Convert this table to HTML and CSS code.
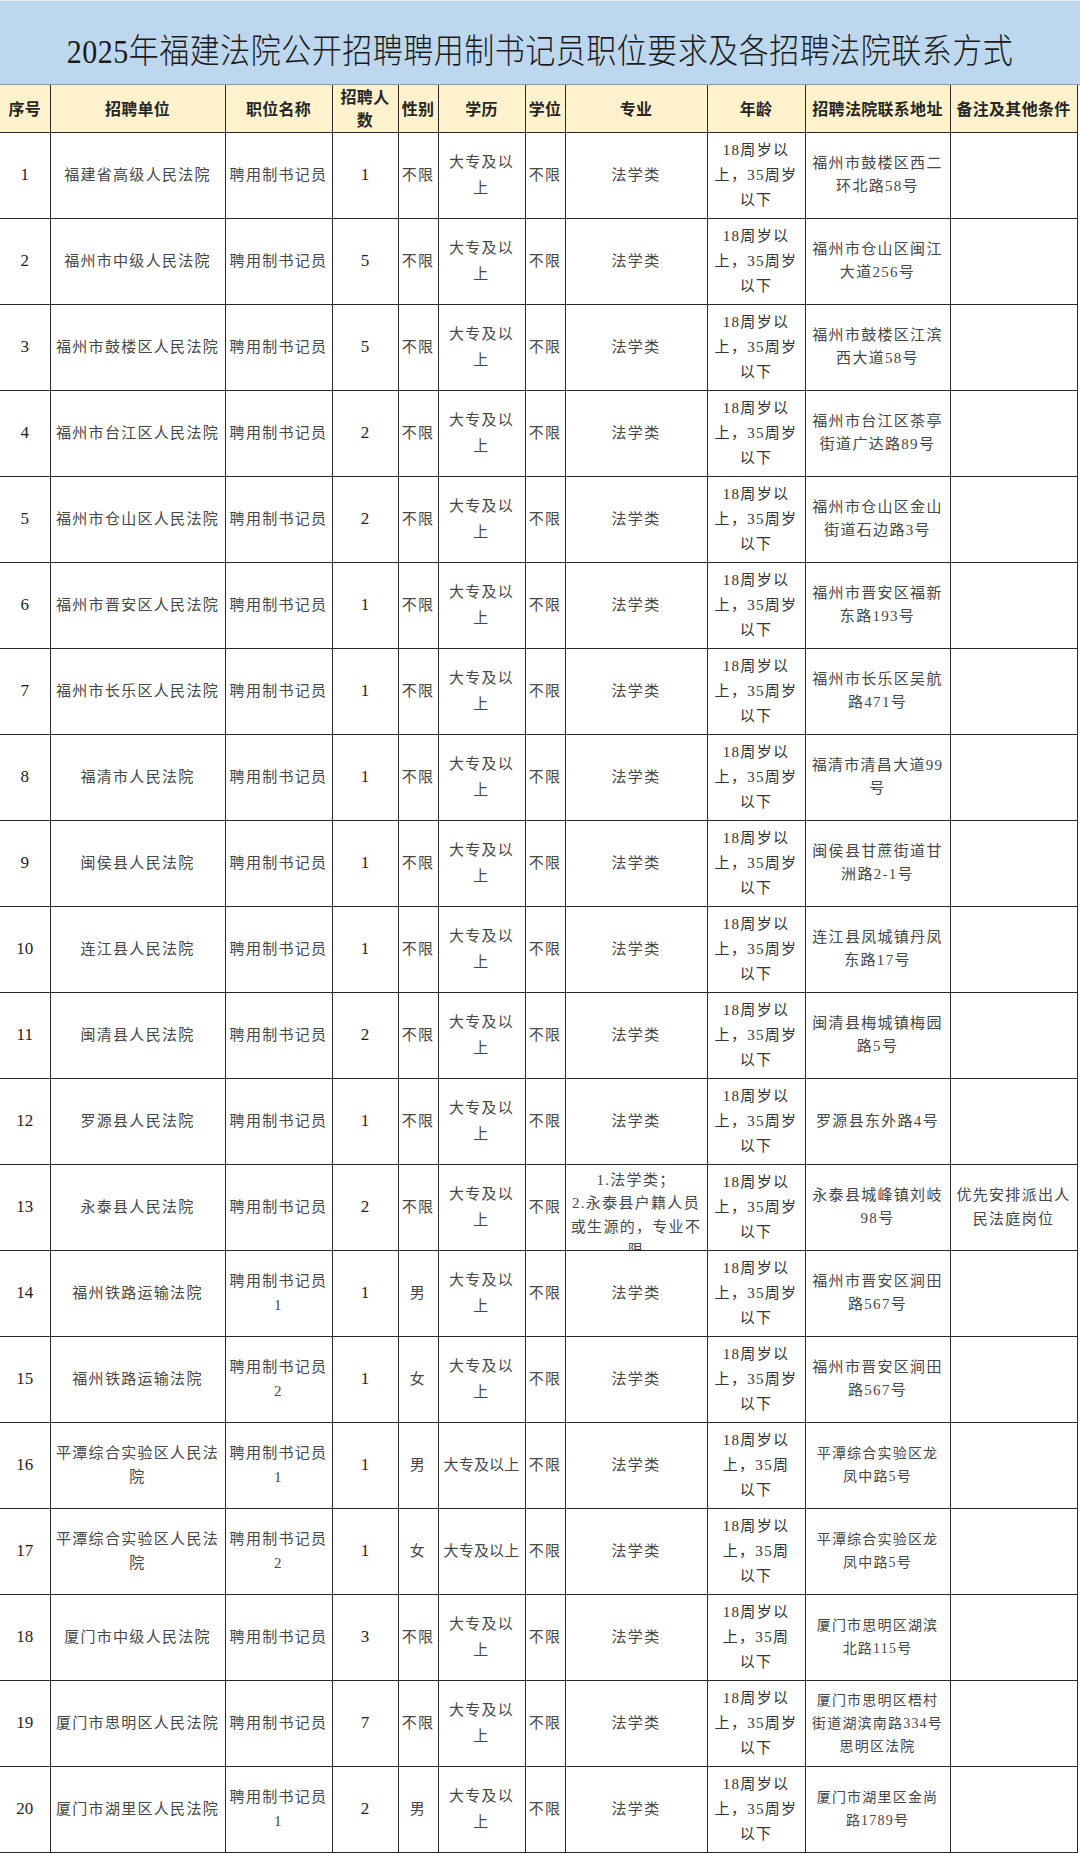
FILE: index.html
```html
<!DOCTYPE html>
<html lang="zh-CN">
<head>
<meta charset="utf-8">
<title>2025年福建法院公开招聘聘用制书记员职位要求及各招聘法院联系方式</title>
<link rel="stylesheet" href="styles.css">
</head>
<body>
<div class="sheet">
  <h1 class="title"><span class="title-text">2025年福建法院公开招聘聘用制书记员职位要求及各招聘法院联系方式</span></h1>
  <table class="grid">
    <colgroup>
      <col class="w-no"><col class="w-unit"><col class="w-pos"><col class="w-num"><col class="w-sex"><col class="w-edu"><col class="w-deg"><col class="w-major"><col class="w-age"><col class="w-addr"><col class="w-note">
    </colgroup>
    <thead>
      <tr class="head">
        <th>序号</th><th>招聘单位</th><th>职位名称</th><th>招聘人<br>数</th><th>性别</th><th>学历</th><th>学位</th><th>专业</th><th>年龄</th><th>招聘法院联系地址</th><th>备注及其他条件</th>
      </tr>
    </thead>
    <tbody>
      <tr><td class="no">1</td><td>福建省高级人民法院</td><td>聘用制书记员</td><td class="num">1</td><td>不限</td><td class="edu">大专及以<br>上</td><td class="gl">不限</td><td>法学类</td><td class="age">18周岁以<br>上，35周岁<br>以下</td><td class="addr">福州市鼓楼区西二<br>环北路58号</td><td class="note"></td></tr>
      <tr><td class="no">2</td><td>福州市中级人民法院</td><td>聘用制书记员</td><td class="num">5</td><td>不限</td><td class="edu">大专及以<br>上</td><td class="gl">不限</td><td>法学类</td><td class="age">18周岁以<br>上，35周岁<br>以下</td><td class="addr">福州市仓山区闽江<br>大道256号</td><td class="note"></td></tr>
      <tr><td class="no">3</td><td>福州市鼓楼区人民法院</td><td>聘用制书记员</td><td class="num">5</td><td>不限</td><td class="edu">大专及以<br>上</td><td class="gl">不限</td><td>法学类</td><td class="age">18周岁以<br>上，35周岁<br>以下</td><td class="addr">福州市鼓楼区江滨<br>西大道58号</td><td class="note"></td></tr>
      <tr><td class="no">4</td><td>福州市台江区人民法院</td><td>聘用制书记员</td><td class="num">2</td><td>不限</td><td class="edu">大专及以<br>上</td><td class="gl">不限</td><td>法学类</td><td class="age">18周岁以<br>上，35周岁<br>以下</td><td class="addr">福州市台江区茶亭<br>街道广达路89号</td><td class="note"></td></tr>
      <tr><td class="no">5</td><td>福州市仓山区人民法院</td><td>聘用制书记员</td><td class="num">2</td><td>不限</td><td class="edu">大专及以<br>上</td><td class="gl">不限</td><td>法学类</td><td class="age">18周岁以<br>上，35周岁<br>以下</td><td class="addr">福州市仓山区金山<br>街道石边路3号</td><td class="note"></td></tr>
      <tr><td class="no">6</td><td>福州市晋安区人民法院</td><td>聘用制书记员</td><td class="num">1</td><td>不限</td><td class="edu">大专及以<br>上</td><td class="gl">不限</td><td>法学类</td><td class="age">18周岁以<br>上，35周岁<br>以下</td><td class="addr">福州市晋安区福新<br>东路193号</td><td class="note"></td></tr>
      <tr><td class="no">7</td><td>福州市长乐区人民法院</td><td>聘用制书记员</td><td class="num">1</td><td>不限</td><td class="edu">大专及以<br>上</td><td class="gl">不限</td><td>法学类</td><td class="age">18周岁以<br>上，35周岁<br>以下</td><td class="addr">福州市长乐区吴航<br>路471号</td><td class="note"></td></tr>
      <tr><td class="no">8</td><td>福清市人民法院</td><td>聘用制书记员</td><td class="num">1</td><td>不限</td><td class="edu">大专及以<br>上</td><td class="gl">不限</td><td>法学类</td><td class="age">18周岁以<br>上，35周岁<br>以下</td><td class="addr">福清市清昌大道99<br>号</td><td class="note"></td></tr>
      <tr><td class="no">9</td><td>闽侯县人民法院</td><td>聘用制书记员</td><td class="num">1</td><td>不限</td><td class="edu">大专及以<br>上</td><td class="gl">不限</td><td>法学类</td><td class="age">18周岁以<br>上，35周岁<br>以下</td><td class="addr">闽侯县甘蔗街道甘<br>洲路2-1号</td><td class="note"></td></tr>
      <tr><td class="no">10</td><td>连江县人民法院</td><td>聘用制书记员</td><td class="num">1</td><td>不限</td><td class="edu">大专及以<br>上</td><td class="gl">不限</td><td>法学类</td><td class="age">18周岁以<br>上，35周岁<br>以下</td><td class="addr">连江县凤城镇丹凤<br>东路17号</td><td class="note"></td></tr>
      <tr><td class="no">11</td><td>闽清县人民法院</td><td>聘用制书记员</td><td class="num">2</td><td>不限</td><td class="edu">大专及以<br>上</td><td class="gl">不限</td><td>法学类</td><td class="age">18周岁以<br>上，35周岁<br>以下</td><td class="addr">闽清县梅城镇梅园<br>路5号</td><td class="note"></td></tr>
      <tr><td class="no">12</td><td>罗源县人民法院</td><td>聘用制书记员</td><td class="num">1</td><td>不限</td><td class="edu">大专及以<br>上</td><td class="gl">不限</td><td>法学类</td><td class="age">18周岁以<br>上，35周岁<br>以下</td><td class="addr">罗源县东外路4号</td><td class="note"></td></tr>
      <tr><td class="no">13</td><td>永泰县人民法院</td><td>聘用制书记员</td><td class="num">2</td><td>不限</td><td class="edu">大专及以<br>上</td><td class="gl">不限</td><td class="clip-cell"><div class="clip">1.法学类；<br>2.永泰县户籍人员<br>或生源的，专业不<br>限</div></td><td class="age">18周岁以<br>上，35周岁<br>以下</td><td class="addr">永泰县城峰镇刘岐<br>98号</td><td class="note">优先安排派出人<br>民法庭岗位</td></tr>
      <tr><td class="no">14</td><td>福州铁路运输法院</td><td>聘用制书记员<br>1</td><td class="num">1</td><td>男</td><td class="edu">大专及以<br>上</td><td class="gl">不限</td><td>法学类</td><td class="age">18周岁以<br>上，35周岁<br>以下</td><td class="addr">福州市晋安区涧田<br>路567号</td><td class="note"></td></tr>
      <tr><td class="no">15</td><td>福州铁路运输法院</td><td>聘用制书记员<br>2</td><td class="num">1</td><td>女</td><td class="edu">大专及以<br>上</td><td class="gl">不限</td><td>法学类</td><td class="age">18周岁以<br>上，35周岁<br>以下</td><td class="addr">福州市晋安区涧田<br>路567号</td><td class="note"></td></tr>
      <tr><td class="no">16</td><td>平潭综合实验区人民法<br>院</td><td>聘用制书记员<br>1</td><td class="num">1</td><td>男</td><td class="edu tight">大专及以上</td><td class="gl">不限</td><td>法学类</td><td class="age">18周岁以<br>上，35周<br>以下</td><td class="addr small">平潭综合实验区龙<br>凤中路5号</td><td class="note"></td></tr>
      <tr><td class="no">17</td><td>平潭综合实验区人民法<br>院</td><td>聘用制书记员<br>2</td><td class="num">1</td><td>女</td><td class="edu tight">大专及以上</td><td class="gl">不限</td><td>法学类</td><td class="age">18周岁以<br>上，35周<br>以下</td><td class="addr small">平潭综合实验区龙<br>凤中路5号</td><td class="note"></td></tr>
      <tr><td class="no">18</td><td>厦门市中级人民法院</td><td>聘用制书记员</td><td class="num">3</td><td>不限</td><td class="edu">大专及以<br>上</td><td class="gl">不限</td><td>法学类</td><td class="age">18周岁以<br>上，35周<br>以下</td><td class="addr small">厦门市思明区湖滨<br>北路115号</td><td class="note"></td></tr>
      <tr><td class="no">19</td><td>厦门市思明区人民法院</td><td>聘用制书记员</td><td class="num">7</td><td>不限</td><td class="edu">大专及以<br>上</td><td class="gl">不限</td><td>法学类</td><td class="age">18周岁以<br>上，35周岁<br>以下</td><td class="addr small">厦门市思明区梧村<br>街道湖滨南路334号<br>思明区法院</td><td class="note"></td></tr>
      <tr><td class="no">20</td><td>厦门市湖里区人民法院</td><td>聘用制书记员<br>1</td><td class="num">2</td><td>男</td><td class="edu">大专及以<br>上</td><td class="gl">不限</td><td>法学类</td><td class="age">18周岁以<br>上，35周岁<br>以下</td><td class="addr small">厦门市湖里区金尚<br>路1789号</td><td class="note"></td></tr>
    </tbody>
  </table>
</div>
</body>
</html>
```

FILE: styles.css
```css
html, body {
  margin: 0;
  padding: 0;
  background: #ffffff;
}

.sheet {
  width: 1080px;
  font-family: "Liberation Serif", "Noto Sans CJK SC", serif;
  color: #474747;
}

.title {
  margin: 0;
  height: 85px;
  box-sizing: border-box;
  border-top: 1px solid #e4eef8;
  border-bottom: 1px solid #8a9aa8;
  background: #bdd7ee;
  display: flex;
  align-items: center;
  justify-content: center;
  padding: 10px 0 0 0;
  font-family: "Liberation Serif", "Noto Sans CJK SC", serif;
  font-weight: 300;
  font-size: 30px;
  letter-spacing: 0.5px;
  color: #1a1a1a;
}

.title-text {
  display: inline-block;
  transform: scaleY(1.15);
}

.grid {
  width: 1077px;
  table-layout: fixed;
  border-collapse: collapse;
}

.w-no { width: 50px; }
.w-unit { width: 175px; }
.w-pos { width: 107px; }
.w-num { width: 66px; }
.w-sex { width: 40px; }
.w-edu { width: 87px; }
.w-deg { width: 40px; }
.w-major { width: 142px; }
.w-age { width: 98px; }
.w-addr { width: 145px; }
.w-note { width: 127px; }

.grid th,
.grid td {
  border: 1px solid #2a2a2a;
  padding: 0;
  text-align: center;
  vertical-align: middle;
  white-space: nowrap;
  overflow: hidden;
}

.grid th:first-child,
.grid td:first-child {
  border-left: none;
}

.head {
  height: 47px;
  background: #fff2cc;
}

.head th {
  font-family: "Noto Sans CJK SC", sans-serif;
  font-weight: 700;
  font-size: 16px;
  line-height: 23px;
  letter-spacing: 0.3px;
  color: #262626;
  border-top: none;
}

.grid tbody tr {
  height: 86px;
}

.grid td {
  font-size: 15px;
  line-height: 24px;
  letter-spacing: 1.3px;
}

.grid td.no,
.grid td.num {
  font-size: 17px;
  letter-spacing: 0;
  color: #1e1e1e;
}

.grid td.edu {
  line-height: 26px;
}

.grid td.edu.tight {
  letter-spacing: 0.2px;
}

.grid td.age {
  line-height: 25px;
  color: #333333;
}

.grid td.addr {
  line-height: 23px;
}

.grid td.addr.small {
  font-size: 14px;
  letter-spacing: 1.2px;
}

.grid td.gl {
  border-left-color: #777777;
}

.grid td.note {
  border-left-color: #777777;
}

.grid td.clip-cell {
  vertical-align: top;
}

.clip {
  height: 85px;
  overflow: hidden;
  box-sizing: border-box;
  padding-top: 4px;
  line-height: 23.5px;
}
```
